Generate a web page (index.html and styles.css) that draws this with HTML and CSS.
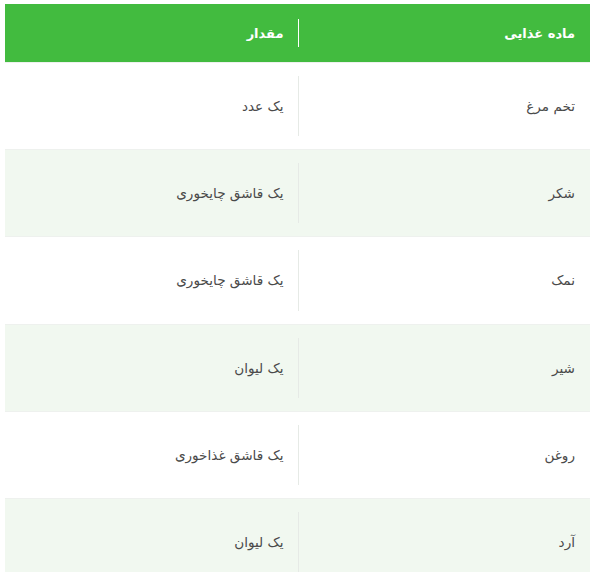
FILE: index.html
```html
<!DOCTYPE html>
<html lang="fa" dir="rtl">
<head>
<meta charset="utf-8">
<link rel="stylesheet" href="styles.css">
</head>
<body>
<div class="table">
  <div class="row head">
    <div class="cell"><div class="in sep">ماده غذایی</div></div>
    <div class="cell"><div class="in">مقدار</div></div>
  </div>
  <div class="row">
    <div class="cell"><div class="in sep">تخم مرغ</div></div>
    <div class="cell"><div class="in">یک عدد</div></div>
  </div>
  <div class="row alt">
    <div class="cell"><div class="in sep">شکر</div></div>
    <div class="cell"><div class="in">یک قاشق چایخوری</div></div>
  </div>
  <div class="row">
    <div class="cell"><div class="in sep">نمک</div></div>
    <div class="cell"><div class="in">یک قاشق چایخوری</div></div>
  </div>
  <div class="row alt">
    <div class="cell"><div class="in sep">شیر</div></div>
    <div class="cell"><div class="in">یک لیوان</div></div>
  </div>
  <div class="row">
    <div class="cell"><div class="in sep">روغن</div></div>
    <div class="cell"><div class="in">یک قاشق غذاخوری</div></div>
  </div>
  <div class="row alt">
    <div class="cell"><div class="in sep">آرد</div></div>
    <div class="cell"><div class="in">یک لیوان</div></div>
  </div>
</div>
</body>
</html>
```
FILE: styles.css
```css
html, body {
  background: #ffffff;
}
body {
  margin: 4px 0 0 5px;
  font-family: "DejaVu Sans", "Noto Sans", sans-serif;
  font-size: 13.6px;
  color: #4a4a4a;
}
.table {
  width: 585px;
}
.row {
  display: grid;
  grid-template-columns: 1fr 1fr;
  height: 86.2px;
  border-top: 1px solid #eef1ee;
  background: #ffffff;
}
.row.alt {
  background: #f1f8f0;
}
.row.head {
  height: 58px;
  border-top: none;
  background: #42bb3f;
  color: #ffffff;
  font-weight: bold;
  font-size: 13px;
}
.cell {
  padding: 13px 0;
  box-sizing: border-box;
}
.head .cell {
  padding: 15px 0;
}
.in {
  height: 100%;
  display: flex;
  align-items: center;
  padding-right: 15px;
  box-sizing: border-box;
}
.cell + .cell .in {
  padding-right: 14px;
}
.in.sep {
  border-left: 1px solid #e6eae6;
}
.head .in.sep {
  border-left: 1px solid #ffffff;
}
```
